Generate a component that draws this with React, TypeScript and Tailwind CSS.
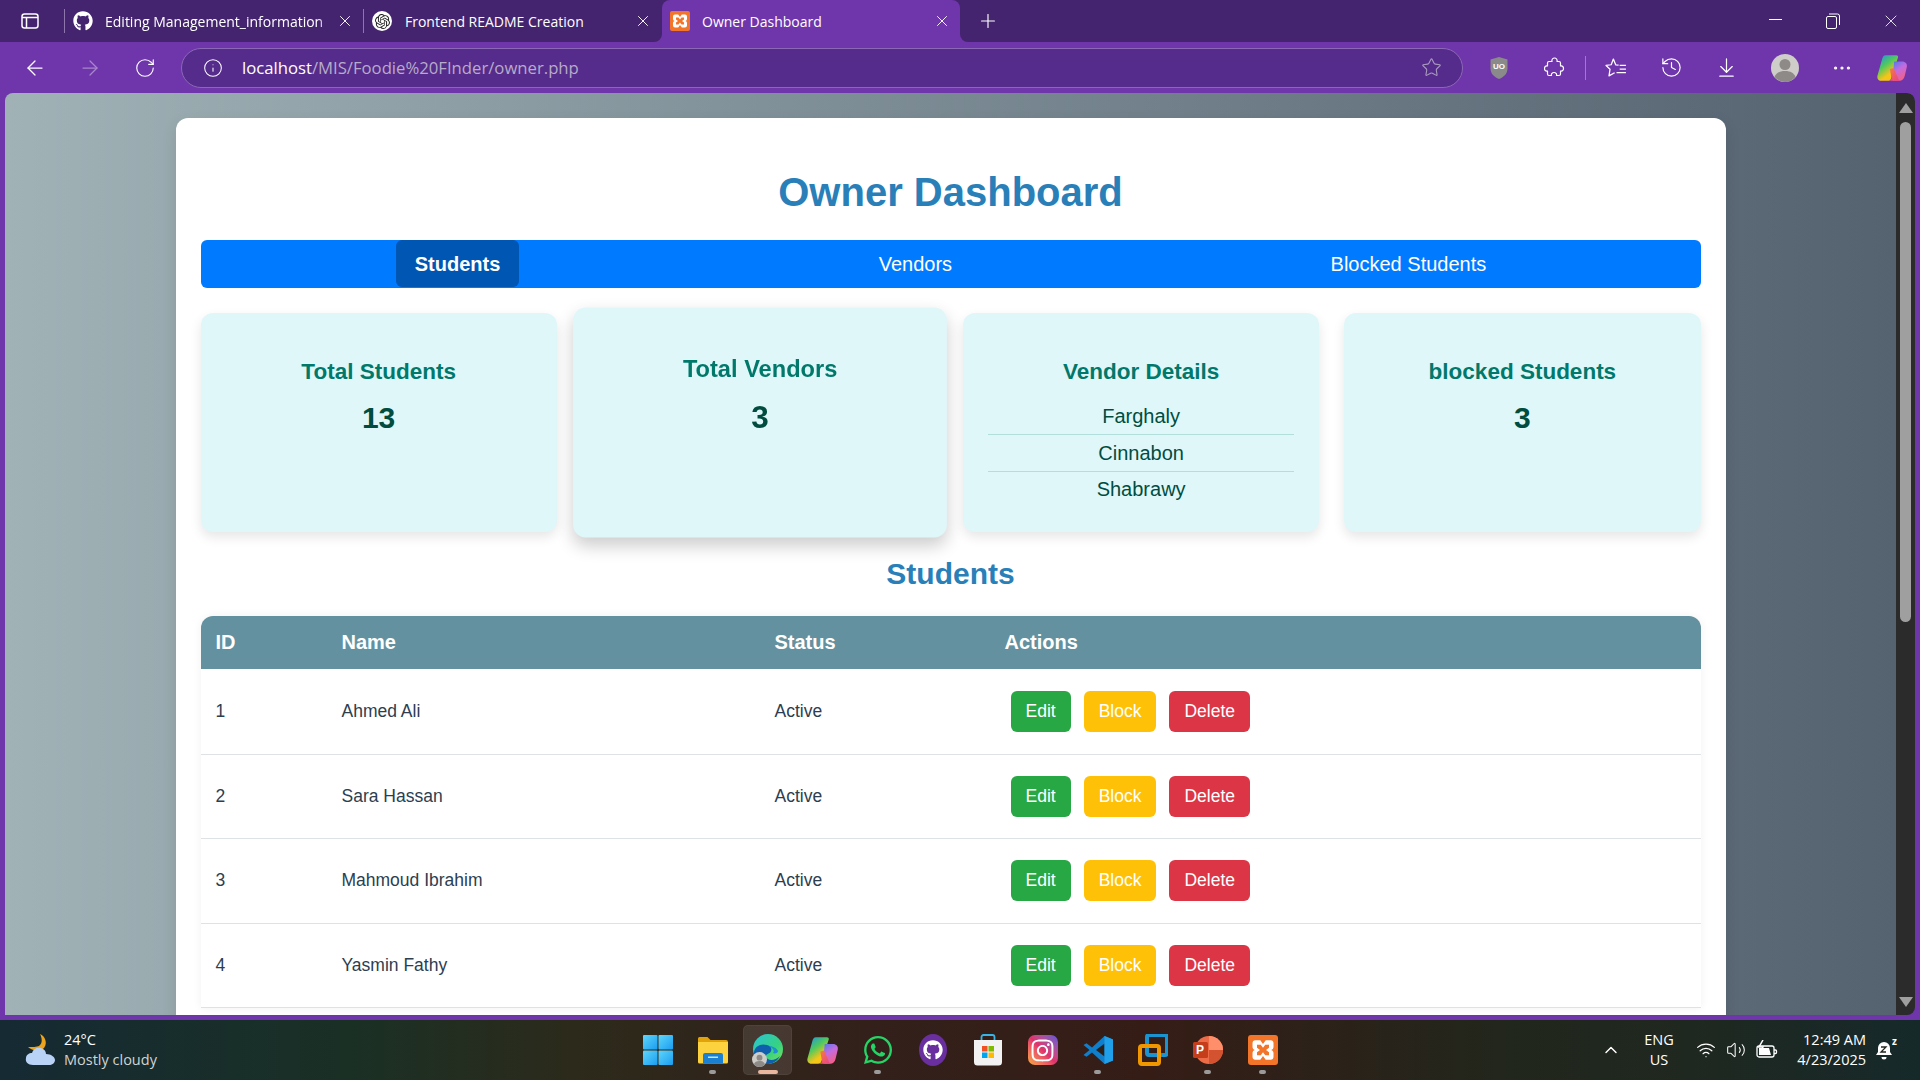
import React from "react";
import {
  ArrowLeft, ArrowRight, RotateCw, Info, Star, History, ArrowDownToLine, MoreHorizontal, X, Plus, ChevronUp, Wifi, Volume2,
} from "lucide-react";
import { FaGithub, FaWhatsapp, FaInstagram } from "react-icons/fa";
import { SiOpenai } from "react-icons/si";

const Xampp = ({ size = 20 }: { size?: number }) => (
  <svg width={size} height={size} viewBox="0 0 20 20">
    <rect width="20" height="20" rx="2" fill="#f2752a" />
    <path d="M5 3.5h3.2L10 6l1.8-2.5H15a2 2 0 0 1 2 2v2.6A2 2 0 0 1 15.5 10 2 2 0 0 1 17 12v2.5a2 2 0 0 1-2 2h-3.2L10 14l-1.8 2.5H5a2 2 0 0 1-2-2V12a2 2 0 0 1 1.5-2A2 2 0 0 1 3 8.100V5.500a2 2 0 0 1 2-2z" fill="#fff" />
    <path d="M6 6.500h2.500L10 8.500l1.500-2H14v2l-2 1.500 2 1.500v2h-2.500l-1.500-2-1.500 2H6v-2L8 10 6 8.500z" fill="#f2752a" />
  </svg>
);

const Copilot = ({ size = 30, id }: { size?: number; id: string }) => (
  <svg width={size} height={size} viewBox="0 0 30 30">
    <defs>
      <linearGradient id={id + "a"} x1="0" y1="0" x2="0.6" y2="1">
        <stop offset="0" stopColor="#1f8fe8" />
        <stop offset="0.45" stopColor="#4fc95f" />
        <stop offset="0.8" stopColor="#f5c518" />
      </linearGradient>
      <linearGradient id={id + "b"} x1="0" y1="0" x2="0.5" y2="1">
        <stop offset="0" stopColor="#4a7bea" />
        <stop offset="0.5" stopColor="#c36be0" />
        <stop offset="1" stopColor="#f0608a" />
      </linearGradient>
      <linearGradient id={id + "c"} x1="0" y1="0" x2="1" y2="1">
        <stop offset="0" stopColor="#f5803d" />
        <stop offset="1" stopColor="#e8408a" />
      </linearGradient>
    </defs>
    <path d="M9 3h10c1.500 0 2 1 1.600 2.200L14 25c-.5 1.500-1.500 2-3 2H5c-2.800 0-4.300-2.200-3.600-5L5.500 7.500C6.200 4.500 7 3 9 3z" fill={`url(#${id}a)`} />
    <path d="M17 9h7.500c3 0 5 2.200 4.400 5l-2 8.500c-.7 3-2.400 4.500-5 4.500H17c-1.500 0-2-1-1.500-2.500z" fill={`url(#${id}b)`} />
    <path d="M13 16l3.500-1 4 9c.5 1.500 1 3 2.500 3H11c2.500 0 3-1 3.500-2.500z" fill={`url(#${id}c)`} />
  </svg>
);

const Avatar = ({ size = 28 }: { size?: number }) => (
  <svg width={size} height={size} viewBox="0 0 28 28">
    <circle cx="14" cy="14" r="14" fill="#cfcdc9" />
    <circle cx="14" cy="10.500" r="5.500" fill="#8d8a87" />
    <path d="M3.500 23c1.500-4 5-6 10.500-6s9 2 10.500 6A14 14 0 0 1 14 28 14 14 0 0 1 3.500 23z" fill="#8d8a87" />
  </svg>
);

const UBlock = () => (
  <div className="relative w-[20px] h-[24px] flex items-center justify-center">
    <svg width="20" height="24" viewBox="0 0 20 24" className="absolute inset-0">
      <path d="M10 1l8.500 2.500v9c0 5-3.500 8.500-8.500 10.500C5 21 1.500 17.500 1.500 12.500v-9z" fill="#8a8a8a" />
    </svg>
    <span className="relative text-[8px] font-bold text-white font-['Liberation_Sans',sans-serif] leading-none -mt-[2px]">UO</span>
  </div>
);

const PuzzleIcon = () => (
  <svg width="22" height="22" viewBox="0 0 22 22" fill="none" stroke="#fff" strokeWidth="1.200" strokeLinejoin="round">
    <path d="M5 4.500h3c-.5-2 .8-3.500 2.500-3.500s3 1.500 2.500 3.500h2a1.500 1.500 0 0 1 1.500 1.500v3c2-.5 3 1 3 2.500s-1 3-3 2.500v3a1.500 1.500 0 0 1-1.500 1.500h-2.500c.5-1.800-.8-3-2.500-3s-3 1.200-2.500 3H5a1.500 1.500 0 0 1-1.500-1.500v-3c-2 .5-3-1-3-2.500s1-3 3-2.500V6A1.500 1.500 0 0 1 5 4.500z" />
  </svg>
);

const Favs = () => (
  <svg width="22" height="22" viewBox="0 0 21 20" fill="none" stroke="#fff" strokeWidth="1.200" strokeLinejoin="round">
    <path d="M13 7.200l-2.800-.3L8 1.500 5.900 6.900 1 7.600l3.800 3.600-1 6.300 5.400-3" />
    <path d="M14 7.500h6M14 11h6M11 14.500h9" />
  </svg>
);

const Edge = () => (
  <div className="relative w-[32px] h-[32px]">
    <svg width="32" height="32" viewBox="0 0 32 32">
      <defs>
        <linearGradient id="edgeA" x1="0" y1="0" x2="1" y2="1">
          <stop offset="0" stopColor="#2bc3d6" />
          <stop offset="0.6" stopColor="#36d27f" />
          <stop offset="1" stopColor="#7fe25a" />
        </linearGradient>
      </defs>
      <circle cx="16" cy="15" r="15" fill="url(#edgeA)" />
      <path d="M2 18c1-6 7-9 13-7 4 1 5 4 4 6-1 3-6 3-5 6 1 3 8 5 14-1-3 6-8 8-13 8C8 30 1 25 2 18z" fill="#0f5fae" />
      <path d="M17 12c3 0 8 2 9 5 0 2-3 3-5 2 2-2 0-5-4-7z" fill="#1e8fd0" />
    </svg>
    <div className="absolute left-[0px] bottom-[-1px]"><Avatar size={15} /></div>
  </div>
);

const Folder = () => (
  <svg width="30" height="30" viewBox="0 0 30 30">
    <path d="M0 3.500A1.500 1.500 0 0 1 1.500 2h8l3 3H28a2 2 0 0 1 2 2v3H0z" fill="#e0a30c" />
    <path d="M0 7h30v20a1.500 1.500 0 0 1-1.500 1.500h-27A1.500 1.500 0 0 1 0 27z" fill="#fcd23f" />
    <path d="M5 28.500V20a2 2 0 0 1 2-2h16a2 2 0 0 1 2 2v8.500z" fill="#1a80cf" />
    <rect x="10" y="21.500" width="10" height="1.500" fill="#bfe4fa" />
  </svg>
);

const WinLogo = () => (
  <svg width="30" height="30" viewBox="0 0 30 30">
    <defs>
      <linearGradient id="w" x1="0" y1="0" x2="1" y2="1">
        <stop offset="0" stopColor="#5fd6fb" />
        <stop offset="1" stopColor="#1a9df0" />
      </linearGradient>
    </defs>
    <rect x="0" y="0" width="14.500" height="14.500" rx="1" fill="url(#w)" />
    <rect x="15.500" y="0" width="14.500" height="14.500" rx="1" fill="url(#w)" />
    <rect x="0" y="15.500" width="14.500" height="14.500" rx="1" fill="url(#w)" />
    <rect x="15.500" y="15.500" width="14.500" height="14.500" rx="1" fill="url(#w)" />
  </svg>
);

const Store = () => (
  <svg width="30" height="32" viewBox="0 0 30 32">
    <path d="M8.500 6V3a2 2 0 0 1 2-2h9a2 2 0 0 1 2 2v3" fill="none" stroke="#35b5e8" strokeWidth="1.800" />
    <path d="M1 6h28v22a3.500 3.500 0 0 1-3.500 3.500h-21A3.500 3.500 0 0 1 1 28z" fill="#f2f2f2" />
    <rect x="9" y="12" width="5.500" height="5.500" fill="#f05022" />
    <rect x="15.500" y="12" width="5.500" height="5.500" fill="#7fba00" />
    <rect x="9" y="18.500" width="5.500" height="5.500" fill="#00a4ef" />
    <rect x="15.500" y="18.500" width="5.500" height="5.500" fill="#ffb900" />
  </svg>
);

const VSCode = () => (
  <svg width="30" height="30" viewBox="0 0 30 30">
    <path d="M21.500 1L30 4.500v21L21.500 29 9 17.500l-5.500 4.200L0.500 20l6-5-6-5 3-1.700L9 12.500z" fill="#0f7fcb" />
    <path d="M21.500 8.500L13 15l8.500 6.500z" fill="#2a2018" />
    <path d="M21.500 1L30 4.500v21L21.500 29z" fill="#21a0ea" />
  </svg>
);

const VMware = () => (
  <svg width="30" height="32" viewBox="0 0 30 32">
    <rect x="9" y="1" width="20" height="20" rx="2" fill="none" stroke="#1a94d0" strokeWidth="4" />
    <rect x="2" y="12" width="19" height="18" rx="2" fill="none" stroke="#f09700" strokeWidth="4" />
  </svg>
);

const Powerpoint = () => (
  <div className="relative w-[30px] h-[30px]">
    <svg width="30" height="30" viewBox="0 0 30 30">
      <circle cx="16" cy="15" r="14" fill="#ed6c47" />
      <path d="M16 1a14 14 0 0 1 14 14H16z" fill="#ff8f6b" />
      <path d="M16 15h14a14 14 0 0 1-14 14z" fill="#d35230" />
      <rect x="0" y="7" width="15" height="16" rx="1.500" fill="#c43e1c" />
    </svg>
    <span className="absolute left-0 top-[7px] w-[15px] text-center text-[12px] leading-[16px] font-bold text-white font-['Liberation_Sans',sans-serif]">P</span>
  </div>
);

const Weather = () => (
  <svg width="32" height="34" viewBox="0 0 32 34">
    <path d="M16 1c2 4 3 9-1 12-2 1-7 1-11 1 3 3 11 6 16 1 4-5 1-12-4-14z" fill="#eca41e" />
    <path d="M9 32c-5 0-8-3-7-7 0-3 3-5 6-5 1-4 5-6 9-5 3 1 5 3 5 6 5 0 9 3 9 6 0 3-3 5-6 5z" fill="#b9d3f7" />
  </svg>
);

const Battery = () => (
  <svg width="22" height="20" viewBox="0 0 22 20" fill="none" stroke="#fff" strokeWidth="1.300">
    <rect x="1" y="6" width="17" height="11" rx="2" />
    <path d="M18 10h1.500a1 1 0 0 1 1 1v1.500a1 1 0 0 1-1 1H18" />
    <path d="M3 8h10l2 7H3z" fill="#fff" stroke="none" />
    <path d="M7 0L3 7h4l-2 5" stroke="#fff" strokeWidth="1.500" />
  </svg>
);

const Bell = () => (
  <div className="relative w-[18px] h-[20px]">
    <svg width="18" height="20" viewBox="0 0 18 20">
      <path d="M8 2a6 6 0 0 0-6 6v4l-2 3h16l-2-3V8a6 6 0 0 0-6-6z" fill="#fff" />
      <path d="M5.500 17a2.500 2.500 0 0 0 5 0z" fill="#fff" />
      <path d="M5 7h5l-5 5h5" fill="none" stroke="#22261f" strokeWidth="1.300" />
    </svg>
    <span className="absolute right-[-3px] top-[-4px] text-[10px] font-bold text-white leading-none">z</span>
  </div>
);

const students: { id: number; name: string; cls: string; pad: string }[] = [
  { id: 1, name: "Ahmed Ali", cls: "h-[85.5px]", pad: "pb-0" },
  { id: 2, name: "Sara Hassan", cls: "h-[84px]", pad: "pb-[1px]" },
  { id: 3, name: "Mahmoud Ibrahim", cls: "h-[84.5px]", pad: "pb-[1px]" },
  { id: 4, name: "Yasmin Fathy", cls: "h-[84px]", pad: "pb-0" },
];

const taskIcons: { el: React.ReactNode; dot?: boolean; active?: boolean }[] = [
  { el: <WinLogo /> },
  { el: <Folder />, dot: true },
  { el: <Edge />, active: true },
  { el: <Copilot id="tc" size={33} /> },
  { el: <FaWhatsapp size={32} color="#25d366" />, dot: true },
  {
    el: (
      <div className="w-[28px] h-[32px] rounded-[50%] bg-[#6a2f9e] flex items-center justify-center">
        <FaGithub size={20} color="#fff" />
      </div>
    ),
  },
  { el: <Store /> },
  {
    el: (
      <div className="w-[30px] h-[30px] rounded-[7px] bg-linear-to-tr from-[#f9a63a] via-[#e1306c] to-[#5b51d8] flex items-center justify-center">
        <FaInstagram size={25} color="#fff" />
      </div>
    ),
  },
  { el: <VSCode />, dot: true },
  { el: <VMware /> },
  { el: <Powerpoint />, dot: true },
  { el: <Xampp size={30} />, dot: true },
];

const Card = ({ title, value, lifted }: { title: string; value: string; lifted?: boolean }) => (
  <div
    className={
      "bg-[#e0f7fa] rounded-[12px] text-center pt-[45px] " +
      (lifted ? "scale-[1.05] shadow-[0_8px_16px_rgba(0,0,0,0.2)]" : "shadow-[0_5px_12px_rgba(0,0,0,0.1)]")
    }
  >
    <h3 className="text-[22.5px] leading-[28px] font-bold text-[#00796b]">{title}</h3>
    <div className="mt-[15px] text-[30px] leading-[34px] font-bold text-[#004d40]">{value}</div>
  </div>
);

export default function App() {
  return (
    <div className="w-[1920px] h-[1080px] overflow-hidden flex flex-col bg-[#6f35ab] font-['Open_Sans',sans-serif]">
      {/* Tab strip */}
      <div className="h-[42px] flex shrink-0 text-white text-[14px]">
        <div className="w-[662px] bg-[#6f35ab]">
          <div className="h-full bg-[#44246f] rounded-br-[8px] flex items-center">
            <div className="w-[64px] flex justify-center">
              <svg width="18" height="18" viewBox="0 0 18 18" fill="none" stroke="#fff" strokeWidth="1.500" className="mr-[4px]">
                <rect x="1" y="2" width="16" height="14" rx="2.500" />
                <path d="M1 5.500h16M5.500 5.500V16" />
              </svg>
            </div>
            <div className="w-[299px] h-[24px] flex items-center border-l border-[#8d76ab] pl-[8px] pr-[9px]">
              <FaGithub size={20} color="#fff" className="shrink-0" />
              <span className="ml-[12px] flex-1 whitespace-nowrap [mask-image:linear-gradient(to_right,black_92%,transparent)]">
                Editing Management_information
              </span>
              <X size={18} strokeWidth={1.25} className="shrink-0" />
            </div>
            <div className="w-[298px] h-[24px] flex items-center border-l border-[#8d76ab] pl-[8px] pr-[9px]">
              <div className="w-[20px] h-[20px] rounded-full bg-white flex items-center justify-center shrink-0">
                <SiOpenai size={15} color="#222" />
              </div>
              <span className="ml-[13px] flex-1 whitespace-nowrap">Frontend README Creation</span>
              <X size={18} strokeWidth={1.25} className="shrink-0" />
            </div>
          </div>
        </div>
        <div className="w-[298px] bg-[#44246f]">
          <div className="h-full bg-[#6f35ab] rounded-t-[8px] flex items-center pl-[8px] pr-[9px]">
            <Xampp />
            <span className="ml-[12px] flex-1 whitespace-nowrap">Owner Dashboard</span>
            <X size={18} strokeWidth={1.25} />
          </div>
        </div>
        <div className="flex-1 bg-[#6f35ab]">
          <div className="h-full bg-[#44246f] rounded-bl-[8px] flex items-center pl-[17px]">
            <Plus size={22} strokeWidth={1.25} />
            <div className="ml-auto flex items-center">
              <div className="w-[58px] flex justify-center">
                <div className="w-[13px] h-[1px] bg-white mb-[4px]" />
              </div>
              <div className="w-[58px] flex justify-center">
                <svg width="14" height="16" viewBox="0 0 14 16" fill="none" stroke="#fff" strokeWidth="1">
                  <rect x="0.500" y="3.500" width="10" height="12" rx="1.500" />
                  <path d="M3 1h8.500A2 2 0 0 1 13.500 3v9" />
                </svg>
              </div>
              <div className="w-[58px] flex justify-center">
                <X size={20} strokeWidth={1} />
              </div>
            </div>
          </div>
        </div>
      </div>

      {/* Toolbar */}
      <div className="h-[51px] shrink-0 flex items-center text-white">
        <div className="w-[181px] flex items-center">
          <div className="w-[70px] flex justify-center"><ArrowLeft size={24} strokeWidth={1.25} /></div>
          <div className="w-[40px] flex justify-center"><ArrowRight size={24} strokeWidth={1.25} className="opacity-40" /></div>
          <div className="w-[70px] flex justify-center"><RotateCw size={22} strokeWidth={1.25} /></div>
        </div>
        <div className="w-[1282px] h-[40px] rounded-[20px] bg-[#552c8b] border border-[#8b68b6] flex items-center pl-[21px] pr-[20px]">
          <Info size={20} strokeWidth={1.25} />
          <span className="ml-[19px] text-[16.7px] whitespace-nowrap">
            localhost<span className="text-[#b8abc9]">/MIS/Foodie%20FInder/owner.php</span>
          </span>
          <Star size={21} strokeWidth={1.25} className="ml-auto text-[#a99bbd]" />
        </div>
        <div className="flex-1 flex items-center">
          <div className="w-[72px] flex justify-center"><UBlock /></div>
          <div className="w-[39px] flex justify-center"><PuzzleIcon /></div>
          <div className="w-[1px] h-[24px] bg-[#9c7cc5] ml-[11px]" />
          <div className="w-[59px] flex justify-center"><Favs /></div>
          <div className="w-[52px] flex justify-center"><History size={23} strokeWidth={1.25} /></div>
          <div className="w-[59px] flex justify-center"><ArrowDownToLine size={23} strokeWidth={1.25} /></div>
          <div className="w-[57px] flex justify-center"><Avatar /></div>
          <div className="w-[57px] flex justify-center"><MoreHorizontal size={22} strokeWidth={1.5} /></div>
          <div className="w-[44px] flex justify-center"><Copilot id="tb" size={32} /></div>
        </div>
      </div>

      {/* Browser viewport */}
      <div className="h-[922px] shrink-0 ml-[5px] mr-[5px] flex overflow-hidden rounded-t-[8px] font-['Liberation_Sans',sans-serif]">
        <div className="flex-1 bg-linear-to-r from-[#a0b2b6] to-[#556270] pt-[25px] overflow-hidden">
          <div className="w-[1550px] mx-auto bg-white rounded-[12px] px-[25px] pt-[25px] pb-[60px] shadow-[0_5px_15px_rgba(0,0,0,0.1)]">
            <h1 className="mt-[26px] text-center text-[40px] leading-[46px] font-bold text-[#2980b9]">Owner Dashboard</h1>

            <nav className="mt-[25px] h-[48px] bg-[#007bff] rounded-[6px] px-[25px] flex justify-around items-start text-white text-[20px]">
              <a className="h-[47px] px-[19px] flex items-center font-bold bg-[#0056b3] rounded-[6px]">Students</a>
              <a className="h-[47px] px-[19px] flex items-center">Vendors</a>
              <a className="h-[47px] px-[19px] flex items-center">Blocked Students</a>
            </nav>

            <div className="mt-[25px] grid grid-cols-4 gap-[25px] h-[219px]">
              <Card title="Total Students" value="13" />
              <Card title="Total Vendors" value="3" lifted />
              <div className="bg-[#e0f7fa] rounded-[12px] text-center pt-[45px] px-[25px] shadow-[0_5px_12px_rgba(0,0,0,0.1)]">
                <h3 className="text-[22.5px] leading-[28px] font-bold text-[#00796b]">Vendor Details</h3>
                <ul className="mt-[12px] text-[20px] leading-[36px] text-[#004d40]">
                  <li className="border-b border-[#b2dfdb]">Farghaly</li>
                  <li className="border-b border-[#b2dfdb]">Cinnabon</li>
                  <li className="leading-[34px]">Shabrawy</li>
                </ul>
              </div>
              <Card title="blocked Students" value="3" />
            </div>

            <h2 className="mt-[25px] text-center text-[30px] leading-[34px] font-bold text-[#2980b9]">Students</h2>

            <div className="mt-[25px] rounded-t-[12px] overflow-hidden shadow-[0_0_10px_rgba(0,0,0,0.06)]">
              <table className="w-full table-fixed border-collapse">
                <colgroup>
                  <col className="w-[126px]" />
                  <col className="w-[433px]" />
                  <col className="w-[230px]" />
                  <col />
                </colgroup>
                <thead>
                  <tr className="h-[53px] bg-[#64919f] text-white text-[20px] font-bold text-left">
                    <th className="px-[15px] pb-[2px]">ID</th>
                    <th className="px-[15px] pb-[2px]">Name</th>
                    <th className="px-[15px] pb-[2px]">Status</th>
                    <th className="px-[15px] pb-[2px]">Actions</th>
                  </tr>
                </thead>
                <tbody className="text-[17.5px] text-[#2c3e50]">
                  {students.map((s) => (
                    <tr key={s.id} className={s.cls + " border-b border-[#dee2e6]"}>
                      <td className={"px-[15px] " + s.pad}>{s.id}</td>
                      <td className={"px-[15px] " + s.pad}>{s.name}</td>
                      <td className={"px-[15px] " + s.pad}>Active</td>
                      <td className={"px-[15px] " + s.pad}>
                        <div className="flex gap-[13px] ml-[6px] text-white">
                          <button className="h-[41px] px-[15px] rounded-[6px] bg-[#28a745]">Edit</button>
                          <button className="h-[41px] px-[15px] rounded-[6px] bg-[#ffc107]">Block</button>
                          <button className="h-[41px] px-[15px] rounded-[6px] bg-[#dc3545]">Delete</button>
                        </div>
                      </td>
                    </tr>
                  ))}
                </tbody>
              </table>
            </div>
          </div>
        </div>
        {/* Scrollbar */}
        <div className="w-[19px] bg-[#2b2b2b] rounded-tr-[8px] rounded-br-[8px] flex flex-col items-center">
          <div className="mt-[10px] w-0 h-0 border-l-[7px] border-r-[7px] border-b-[10px] border-l-transparent border-r-transparent border-b-[#9f9f9f]" />
          <div className="mt-[9px] w-[11px] h-[500px] rounded-[6px] bg-[#9f9f9f]" />
          <div className="mt-auto mb-[8px] w-0 h-0 border-l-[7px] border-r-[7px] border-t-[10px] border-l-transparent border-r-transparent border-t-[#9f9f9f]" />
        </div>
      </div>

      {/* Taskbar */}
      <div className="mt-[5px] h-[60px] shrink-0 flex items-center text-white bg-[linear-gradient(to_right,#152a33_0%,#1a3025_18%,#2c2a1b_30%,#33201a_45%,#351d16_60%,#22261c_78%,#1f2820_88%,#16292a_100%)]">
        <div className="w-[630px] flex items-center pl-[24px]">
          <Weather />
          <div className="ml-[8px] text-[14.5px] leading-[20px]">
            <div>24°C</div>
            <div className="text-[#d0d4d4]">Mostly cloudy</div>
          </div>
        </div>
        <div className="flex items-center">
          {taskIcons.map((t, i) => (
            <div key={i} className="relative w-[55px] h-[50px] flex items-center justify-center">
              {t.active && <div className="absolute inset-x-[3px] inset-y-0 rounded-[5px] bg-white/10 border border-white/5" />}
              <div className="relative">{t.el}</div>
              {t.dot && <div className="absolute bottom-[1px] left-[24px] w-[7px] h-[4px] rounded-full bg-[#9b9b9b]" />}
              {t.active && <div className="absolute bottom-[1px] left-[18px] w-[20px] h-[4px] rounded-full bg-[#e8b79d]" />}
            </div>
          ))}
        </div>
        <div className="flex-1 flex items-center">
          <ChevronUp size={20} strokeWidth={1.75} className="ml-[311px]" />
          <div className="ml-[18px] w-[40px] text-center text-[14.5px] leading-[20px]">
            <div>ENG</div>
            <div>US</div>
          </div>
          <Wifi size={20} strokeWidth={1.5} className="ml-[17px]" />
          <Volume2 size={20} strokeWidth={1.25} className="ml-[10px]" />
          <div className="ml-[10px]"><Battery /></div>
          <div className="ml-[8px] w-[80px] text-right text-[14.5px] leading-[20px] whitespace-nowrap">
            <div>12:49 AM</div>
            <div>4/23/2025</div>
          </div>
          <div className="ml-[10px]"><Bell /></div>
        </div>
      </div>
    </div>
  );
}
